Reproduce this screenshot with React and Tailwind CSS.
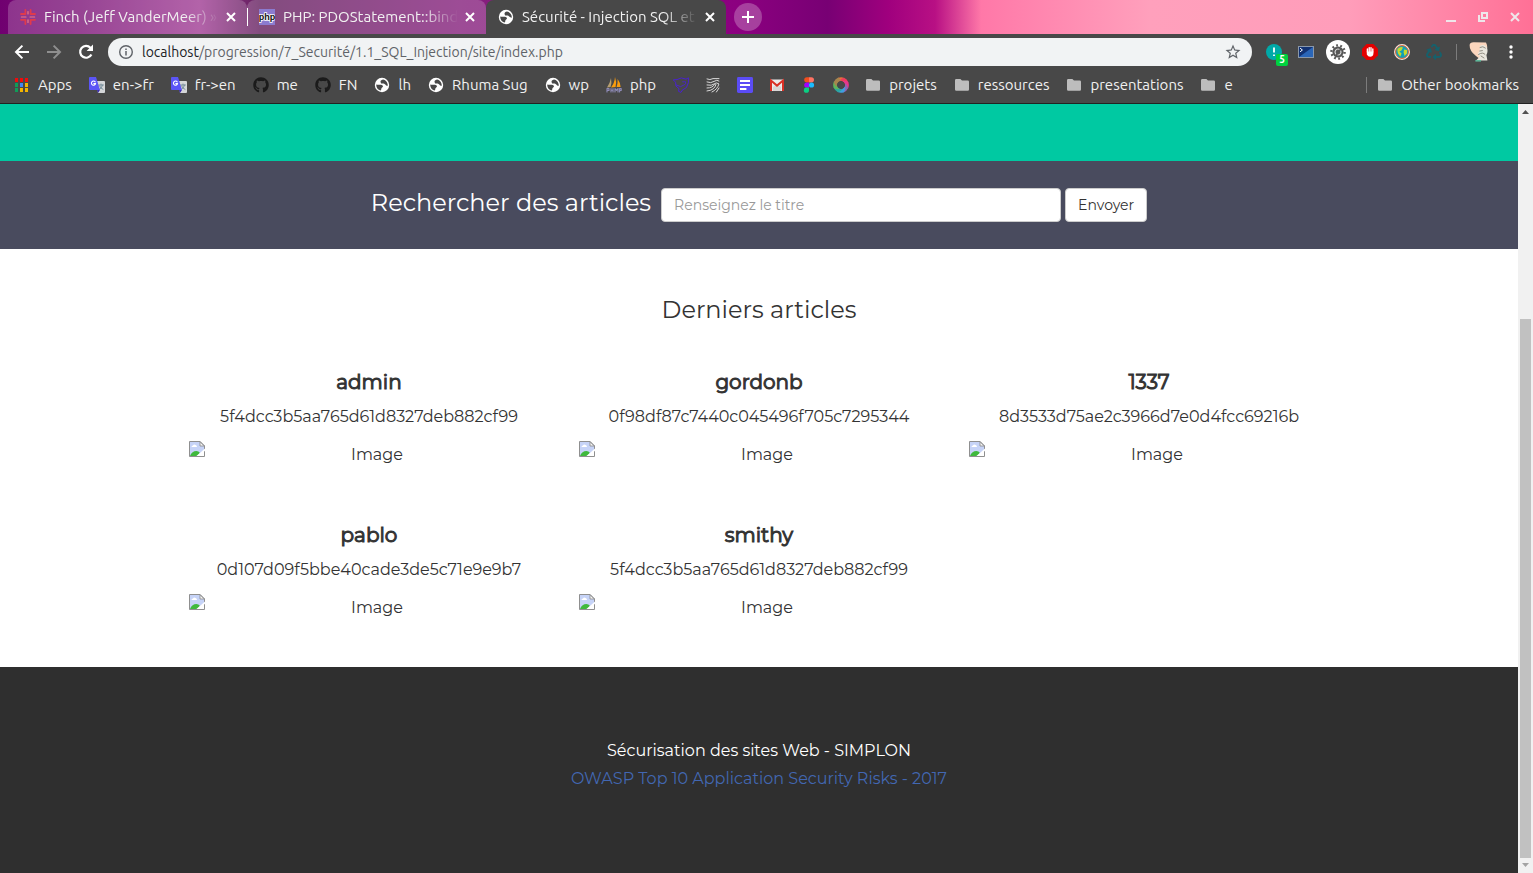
import { FaGithub, FaRecycle } from "react-icons/fa";
import { MdStarBorder } from "react-icons/md";

const stroke = { fill: "none", strokeLinecap: "round", strokeLinejoin: "round" };

function GlobeIcon() {
  return (
    <svg viewBox="0 0 16 16" className="size-4 shrink-0" aria-hidden="true">
      <circle cx="8" cy="8" r="7.2" fill="#fff" />
      <path d="M9 2.4 C7.2 2.8 6.2 3.8 6.6 5.2 L7.2 6.4 H9.6 C11.4 6.6 11 8.4 13.8 8.8 C14 5.6 12 3 9 2.4Z" fill="#484848" />
      <path d="M2.3 7.6 L3.4 7.8 H7 C9.2 8 9.6 9.8 8.2 10.6 C7 11.2 7.6 12.6 6.8 13.6 C4 13 2 10.6 2.3 7.6Z" fill="#484848" />
    </svg>
  );
}

function AppsIcon() {
  const colors = ["#f00b0b", "#f00b0b", "#f00b0b", "#0f9d58", "#4285f4", "#f4b400", "#0f9d58", "#f4b400", "#f4b400"];
  return (
    <svg viewBox="0 0 16 16" className="size-4 shrink-0" aria-hidden="true">
      {colors.map((c, i) => (
        <rect key={i} x={1 + (i % 3) * 5} y={1 + Math.floor(i / 3) * 5} width="3" height="4" fill={c} />
      ))}
    </svg>
  );
}

function TranslateIcon() {
  return (
    <svg viewBox="0 0 16 16" className="size-4 shrink-0" aria-hidden="true">
      <path d="M7 4 H15 Q16 4 16 5 V15 Q16 16 15 16 H9 Z" fill="#d4d6d8" />
      <path d="M9.6 8 H14.4 M12 7 V8 M13.6 8 Q13 11 10.4 12.4 M10.6 9 Q11.6 11.4 14 12.4" stroke="#6d8794" strokeWidth="0.9" {...stroke} />
      <path d="M8 13 H11 L9 16 Z" fill="#3a2bb0" />
      <path d="M1 0 H7 L11 13 H1 Q0 13 0 12 V1 Q0 0 1 0 Z" fill="#5b55f6" />
      <path d="M6.2 4.8 A2.1 2.1 0 1 0 6.6 6.6 H4.8" stroke="#fff" strokeWidth="1.1" {...stroke} />
    </svg>
  );
}

function SailIcon() {
  return (
    <svg viewBox="0 0 16 16" className="size-4 shrink-0" aria-hidden="true">
      <path d="M5 1 Q6 6 4.6 10 L1 10.5 Q4 6 5 1Z" fill="#b8a070" />
      <path d="M9 0 Q11 5 9.6 10 L5 10.4 Q8.6 6 9 0Z M11.6 2 Q14.6 6 14.6 10 L10.6 10 Q12 6 11.6 2Z" fill="#f89c0e" />
      <path d="M1 15 V11.5 H3 V13.4 H1 M5 11.5 V15 M7 11.5 V15 M5 13.2 H7 M9 15 V11.5 L10.5 13.4 L12 11.5 V15 M13.6 15 V11.5 H15.2 V13.4 H13.6" stroke="#8f8bb8" strokeWidth="1.1" {...stroke} />
    </svg>
  );
}

function BirdIcon() {
  return (
    <svg viewBox="0 0 16 16" className="size-4 shrink-0" aria-hidden="true">
      <path d="M0.6 2.8 L4 2.6 Q8 -0.6 13 2.2 L15.4 0.8 V5.6 L13.4 10.6 L9.4 13 L8 15.4 L5.6 14.4 L6 11.6 L3 9 L2.6 5.6 Z" stroke="#4a22d0" strokeWidth="1" {...stroke} />
      <path d="M3.4 8 L7.6 9.6 L12 7.4 M9.6 4.8 H12.6 V6.4" stroke="#4a22d0" strokeWidth="0.9" {...stroke} />
    </svg>
  );
}

function WavesIcon() {
  return (
    <svg viewBox="0 0 16 16" className="size-4 shrink-0" aria-hidden="true">
      <path d="M2 2 Q5 3.4 8 1.6 H14 M2 5 Q6 6.6 9 4.4 T14 4 M2 8 Q7 9 9 7 T13.6 6.6 M2 11 Q8 11 9.4 7.4 M2 14 Q9.6 13.4 11 7.4 M7 15 Q12.4 12.4 13.8 7.4 M11.4 15 L14 11" stroke="#d8d8d8" strokeWidth="1" {...stroke} />
    </svg>
  );
}

function FormIcon() {
  return (
    <svg viewBox="0 0 16 16" className="size-4 shrink-0" aria-hidden="true">
      <rect width="16" height="16" rx="1.4" fill="#5b4cf5" />
      <path d="M3 4 H13 M3 8 H13 M3 12 H9.4" stroke="#fff" strokeWidth="1.8" />
    </svg>
  );
}

function GmailIcon() {
  return (
    <svg viewBox="0 0 16 16" className="size-4 shrink-0" aria-hidden="true">
      <path d="M1 2.5 H15 V14 H1 Z" fill="#eceaea" />
      <path d="M4 10 L8 7.4 L12 10 V14 H4Z" fill="#d8d6d6" />
      <path d="M2 14 V3.6 L8 8.6 L14 3.6 V14" fill="none" stroke="#d93025" strokeWidth="2" />
    </svg>
  );
}

function FigmaIcon() {
  return (
    <svg viewBox="0 0 16 16" className="size-4 shrink-0" aria-hidden="true">
      <path d="M8 0.2 H5.8 A2.6 2.6 0 0 0 5.8 5.4 H8Z" fill="#f24e1e" />
      <path d="M8 0.2 H10.4 A2.6 2.6 0 0 1 10.4 5.4 H8Z" fill="#ff7262" />
      <path d="M8 5.4 H5.8 A2.6 2.6 0 0 0 5.8 10.6 H8Z" fill="#a200ff" />
      <circle cx="10.5" cy="8" r="2.6" fill="#1abcfe" />
      <path d="M8 10.6 H5.8 A2.6 2.6 0 1 0 8 13.2Z" fill="#0acf83" />
    </svg>
  );
}

function SwirlIcon() {
  const colors = ["#e8743b", "#ee3d5c", "#e8358c", "#8f62b3", "#3f9fe0", "#2aa6a0", "#5fb55a", "#a6854e"];
  return (
    <svg viewBox="0 0 16 16" className="size-4 shrink-0" aria-hidden="true">
      {colors.map((c, i) => (
        <path key={c} d="M8 0.2 A7.8 7.8 0 0 1 13.8 2.7 Q13.4 5 11.6 6.2 Q10.8 4 8 3.8 Q6 3.8 4.8 5 Q5.4 1.6 8 0.2Z" fill={c} transform={`rotate(${i * 45 - 22} 8 8)`} />
      ))}
      <circle cx="8" cy="8" r="3.4" fill="#484848" />
    </svg>
  );
}

function FolderIcon() {
  return (
    <svg viewBox="0 0 16 16" className="size-4 shrink-0" aria-hidden="true">
      <path d="M1 3.2 Q1 2 2.2 2 H6.4 L8 3.6 H13.8 Q15 3.6 15 4.8 V12.6 Q15 13.8 13.8 13.8 H2.2 Q1 13.8 1 12.6Z" fill="#bdbdbd" />
    </svg>
  );
}

function GithubIcon() {
  return <FaGithub className="size-4 shrink-0 text-[#1b1b1b]" aria-hidden="true" />;
}

function SlackIcon() {
  return (
    <svg viewBox="0 0 16 16" className="size-4 shrink-0" aria-hidden="true">
      <path d="M5.4 1 V5 H1 M10.6 1 V5 H15 M1 10.8 H5.4 V15 M15 10.8 H10.6 V15" stroke="#e03a4c" strokeWidth="1.8" {...stroke} />
      <path d="M8 2.6 V5 M8 10.8 V13.4 M1.4 8 H6 M10 8 H14.6" stroke="#f07a80" strokeWidth="1.2" {...stroke} />
    </svg>
  );
}

function PhpIcon() {
  return (
    <svg viewBox="0 0 16 16" className="size-4 shrink-0" aria-hidden="true">
      <rect width="16" height="16" fill="#8b7bd0" />
      <text x="8" y="11" textAnchor="middle" fontSize="9" fontWeight="700" fontFamily="Liberation Sans, sans-serif" stroke="#fff" strokeWidth="1.6" paintOrder="stroke" fill="#111">php</text>
    </svg>
  );
}

function CloseIcon() {
  return (
    <svg viewBox="0 0 16 16" className="size-4" aria-hidden="true">
      <path d="M4 4 L12 12 M12 4 L4 12" stroke="currentColor" strokeWidth="2" />
    </svg>
  );
}

function BrokenImageIcon() {
  return (
    <svg viewBox="0 0 16 16" className="size-4 shrink-0" role="img" aria-label="Image manquante">
      <path d="M0.5 0.5 H11 L15.5 5 V9 L9 15.5 H0.5Z" fill="#c6d3f7" />
      <path d="M2.5 6 Q2.6 4.6 4 4.4 Q5 2.8 6.6 4 Q8 4.4 8 6Z" fill="#fff" />
      <path d="M1 15 Q3 10 7.4 10 Q9.6 10.2 11 12 L8.4 15Z" fill="#3fb93d" />
      <path d="M11 0.5 V5 H15.5Z" fill="#f4f4f4" stroke="#8a8a8a" strokeWidth="0.8" />
      <path d="M0.5 15.5 V0.5 H11 L15.5 5 V15.5 Z" fill="none" stroke="#8f8f8f" strokeWidth="1" />
      <path d="M7.4 15 L16 7.6 V9.8 L10.4 15Z" fill="#fff" />
    </svg>
  );
}

const tabs = [
  { title: "Finch (Jeff VanderMeer) »", Icon: SlackIcon },
  { title: "PHP: PDOStatement::bind", Icon: PhpIcon },
  { title: "Sécurité - Injection SQL et", Icon: GlobeIcon, active: true },
];

const bookmarks = [
  { label: "Apps", Icon: AppsIcon },
  { label: "en->fr", Icon: TranslateIcon },
  { label: "fr->en", Icon: TranslateIcon },
  { label: "me", Icon: GithubIcon },
  { label: "FN", Icon: GithubIcon },
  { label: "lh", Icon: GlobeIcon },
  { label: "Rhuma Sug", Icon: GlobeIcon },
  { label: "wp", Icon: GlobeIcon },
  { label: "php", Icon: SailIcon },
  { name: "Oiseau", Icon: BirdIcon },
  { name: "Vagues", Icon: WavesIcon },
  { name: "Formulaire", Icon: FormIcon },
  { name: "Gmail", Icon: GmailIcon },
  { name: "Figma", Icon: FigmaIcon },
  { name: "Spirale", Icon: SwirlIcon },
  { label: "projets", Icon: FolderIcon },
  { label: "ressources", Icon: FolderIcon },
  { label: "presentations", Icon: FolderIcon },
  { label: "e", Icon: FolderIcon },
];

const articles = [
  { title: "admin", text: "5f4dcc3b5aa765d61d8327deb882cf99" },
  { title: "gordonb", text: "0f98df87c7440c045496f705c7295344" },
  { title: "1337", text: "8d3533d75ae2c3966d7e0d4fcc69216b" },
  { title: "pablo", text: "0d107d09f5bbe40cade3de5c71e9e9b7" },
  { title: "smithy", text: "5f4dcc3b5aa765d61d8327deb882cf99" },
];

function Tab({ title, Icon, active }) {
  return (
    <div className={active ? "flex w-60 items-center gap-2 rounded-t-lg bg-[#484848] pr-2 pl-3" : "flex w-[239px] items-center gap-2 rounded-t-lg bg-white/20 pr-2 pl-3"}>
      <Icon />
      <span className="-mr-1 min-w-0 flex-1 overflow-hidden whitespace-nowrap text-[#f1f1f1] mask-r-from-80% mask-r-to-100%">{title}</span>
      <button type="button" aria-label={`Fermer ${title}`} className="text-white"><CloseIcon /></button>
    </div>
  );
}

function TabStrip() {
  return (
    <div className="flex h-[34px] items-stretch bg-[linear-gradient(90deg,#700070_0%,#7c1478_5%,#a03c94_13%,#64205f_17%,#85207c_30%,#8c0080_48%,#780074_54%,#a0007e_58%,#b81084_61%,#ff78a8_64%,#ffa0bc_75%,#ff9dba_88%,#ff7096_100%)] pl-2">
      <Tab {...tabs[0]} />
      <div className="my-2 w-px bg-white" />
      <div className="-ml-px flex">
        <Tab {...tabs[1]} />
        <Tab {...tabs[2]} />
      </div>
      <button type="button" aria-label="Nouvel onglet" className="ml-2 flex size-7 items-center justify-center self-center rounded-full bg-white/25 text-white">
        <svg viewBox="0 0 16 16" className="size-4" aria-hidden="true"><path d="M8 2 V14 M2 8 H14" stroke="currentColor" strokeWidth="2" /></svg>
      </button>
      <div className="ml-auto flex items-center gap-4 pr-2.5 text-[#efe6ea]">
        <button type="button" aria-label="Réduire">
          <svg viewBox="0 0 16 16" className="size-4"><path d="M3 12 H13" stroke="currentColor" strokeWidth="2" /></svg>
        </button>
        <button type="button" aria-label="Restaurer">
          <svg viewBox="0 0 16 16" className="size-4"><path d="M7 4 H12 V9 H7 Z M4 6 V12 H10" fill="none" stroke="currentColor" strokeWidth="2" /></svg>
        </button>
        <button type="button" aria-label="Fermer la fenêtre"><CloseIcon /></button>
      </div>
    </div>
  );
}

function Extensions() {
  return (
    <div className="flex items-center gap-4">
      <button type="button" aria-label="Alertes, 5" className="relative">
        <svg viewBox="0 0 16 16" className="size-4"><circle cx="8" cy="8" r="8" fill="#00a9a8" /><path d="M8 3.6 V8.4 M8 10.4 V12" stroke="#fff" strokeWidth="1.8" /></svg>
        <span className="absolute top-2.5 left-2.5 flex size-3 items-center justify-center rounded-xs bg-[#00d13f] text-[10px] leading-3 font-bold text-white">5</span>
      </button>
      <button type="button" aria-label="Terminal">
        <svg viewBox="0 0 16 16" className="size-4"><rect x="0.5" y="2.5" width="15" height="11" fill="#2a66b8" stroke="#8a98aa" /><path d="M1 3 H15 L1 13Z" fill="#123273" /><path d="M2.4 4.4 L4.4 6 L2.4 7.6" stroke="#fff" strokeWidth="1" {...stroke} /></svg>
      </button>
      <button type="button" aria-label="Débogage" className="-mx-1 flex size-6 items-center justify-center rounded-full bg-white">
        <svg viewBox="0 0 16 16" className="size-4">
          <circle cx="8" cy="8" r="5.6" fill="#565656" />
          <circle cx="8" cy="8" r="6.6" fill="none" stroke="#565656" strokeWidth="2.4" strokeDasharray="1.8 2.35" />
          <path d="M5.6 9.8 A3 3 0 0 1 9 5.2 M10.8 7 A3 3 0 0 1 8 11" stroke="#d8d8d8" strokeWidth="1.2" {...stroke} />
        </svg>
      </button>
      <button type="button" aria-label="Bloqueur">
        <svg viewBox="0 0 16 16" className="size-4"><path d="M4.7 0 H11.3 L16 4.7 V11.3 L11.3 16 H4.7 L0 11.3 V4.7Z" fill="#e40000" /><path d="M5.4 8 V5 M7.2 8 V3.6 M9 8 V3.6 M10.8 8 V5" stroke="#fff" strokeWidth="1.4" {...stroke} /><path d="M4.8 7.4 H11.4 V10 Q11 12.8 8.2 12.8 Q6 12.6 4.8 10.4Z" fill="#fff" /></svg>
      </button>
      <button type="button" aria-label="Globe">
        <svg viewBox="0 0 16 16" className="size-4"><circle cx="8" cy="8" r="7.2" fill="#12a0b8" stroke="#f1e3da" strokeWidth="1.5" /><circle cx="8" cy="8" r="6.4" fill="none" stroke="#e8602c" strokeWidth="1" /><path d="M3.4 5 Q6 2.4 9 3.4 L7.4 6.4 L5.4 7.4 L7.6 9.4 L6.4 12.6 Q3 9.6 3.4 5Z M10 5.4 L13 6 V9.6 L10.6 12 L9.6 8.4Z" fill="#c5d92d" /></svg>
      </button>
      <button type="button" aria-label="Recyclage"><FaRecycle className="size-4 text-[#17606b]" /></button>
      <div className="-ml-0.5 h-4 w-px bg-[#7c7c7c]" />
      <button type="button" aria-label="Profil" className="-ml-1">
        <svg viewBox="0 0 20 20" className="size-5">
          <path d="M0.6 3 Q1 0 5 0.2 L17 0.6 Q20 6 16 11 L12 18 L7 14 Q0.4 9 0.6 3Z" fill="#fbd5bd" />
          <path d="M11 4 Q15 1.4 17.6 5 Q19.6 9 17.4 13 L18.4 18.6 H7 L11 14.6 L8.8 12 L10.6 9Z" fill="#e9e6dd" />
          <path d="M11 5.4 Q14 3.6 16.4 6 M10.8 9 L13.4 8.6 M9.6 12.4 Q14 9.6 16 12.4 M12 14 L15 16" stroke="#7b756a" strokeWidth="0.8" {...stroke} />
          <path d="M6.4 18.8 H12" stroke="#5fb79a" strokeWidth="1.6" />
        </svg>
      </button>
      <button type="button" aria-label="Menu" className="-ml-1 text-white">
        <svg viewBox="0 0 20 20" className="size-5" fill="currentColor"><circle cx="10" cy="5" r="1.7" /><circle cx="10" cy="10" r="1.7" /><circle cx="10" cy="15" r="1.7" /></svg>
      </button>
    </div>
  );
}

function Toolbar() {
  return (
    <div className="flex h-9 items-center gap-3.5 px-3 text-sm">
      <div className="flex items-center gap-3 text-white">
        <button type="button" aria-label="Précédent">
          <svg viewBox="0 0 20 20" className="size-5"><path d="M17 10 H4.6 M10.4 3.6 L4 10 L10.4 16.4" fill="none" stroke="currentColor" strokeWidth="2" /></svg>
        </button>
        <button type="button" aria-label="Suivant" className="text-[#8f8f8f]">
          <svg viewBox="0 0 20 20" className="size-5"><path d="M3 10 H15.4 M9.6 3.6 L16 10 L9.6 16.4" fill="none" stroke="currentColor" strokeWidth="2" /></svg>
        </button>
        <button type="button" aria-label="Actualiser">
          <svg viewBox="0 0 20 20" className="size-5"><path d="M15.4 12.4 A5.9 5.9 0 1 1 14.4 5.8 L15 6.4" fill="none" stroke="currentColor" strokeWidth="2.2" /><path d="M17 2.6 V9 H10.6Z" fill="currentColor" /></svg>
        </button>
      </div>
      <div className="-ml-0.5 flex h-7 flex-1 items-center gap-2 rounded-full bg-[#f1f3f4] px-2.5 text-[#5f6368]">
        <svg viewBox="0 0 16 16" className="size-4" aria-hidden="true"><circle cx="8" cy="8" r="6.3" fill="none" stroke="currentColor" strokeWidth="1.4" /><path d="M8 7 V11.6 M8 4.4 V6" stroke="currentColor" strokeWidth="1.5" /></svg>
        <p className="flex-1"><span className="text-[#202124]">localhost</span>/progression/7_Securité/1.1_SQL_Injection/site/index.php</p>
        <button type="button" aria-label="Ajouter aux favoris"><MdStarBorder className="size-[18px]" /></button>
      </div>
      <Extensions />
    </div>
  );
}

function BookmarkBar() {
  return (
    <nav aria-label="Favoris" className="flex h-[33px] items-center gap-4 px-3.5 pb-[3px] text-[#f1f1f1]">
      {bookmarks.map(({ label, name, Icon }, i) => (
        <a key={i} href="#" aria-label={name} className="flex items-center gap-2 leading-4 whitespace-nowrap">
          <Icon />
          {label && <span className="pr-px">{label}</span>}
        </a>
      ))}
      <a href="#" className="ml-auto flex items-center gap-2 border-l border-[#7c7c7c] pl-2.5 leading-4 whitespace-nowrap">
        <FolderIcon />
        Other bookmarks
      </a>
    </nav>
  );
}

function SearchBand() {
  return (
    <form className="flex h-[88px] items-center justify-center gap-1 bg-[#494b5e]" onSubmit={(e) => e.preventDefault()}>
      <label htmlFor="titre" className="mr-1.5 pb-1 text-2xl text-white">Rechercher des articles</label>
      <input id="titre" type="text" placeholder="Renseignez le titre" className="h-[34px] w-[400px] rounded border border-[#ccc] bg-white px-3 text-sm text-[#555] placeholder:text-[#999]" />
      <button type="submit" className="h-[34px] rounded border border-[#ccc] bg-white px-3 text-sm text-[#333]">Envoyer</button>
    </form>
  );
}

function Article({ title, text }) {
  return (
    <article className="px-[15px] text-center">
      <h3 className="text-xl leading-[26px] [-webkit-text-stroke:1px]">{title}</h3>
      <p className="mt-2.5 leading-6">{text}</p>
      <div className="mt-3 flex items-start">
        <BrokenImageIcon />
        <span className="flex-1 leading-7">Image</span>
      </div>
    </article>
  );
}

function ScrollBar() {
  return (
    <div className="flex w-[15px] shrink-0 flex-col items-center bg-[#f1f1f1]" aria-hidden="true">
      <svg viewBox="0 0 15 15" className="size-[15px]"><path d="M4 10 H11 L7.5 6Z" fill="#505050" /></svg>
      <div className="flex w-[11px] flex-1 flex-col justify-end">
        <div className="h-[73%] bg-[#c1c1c1]" />
      </div>
      <svg viewBox="0 0 15 15" className="size-[15px]"><path d="M4 5 H11 L7.5 9Z" fill="#a3a3a3" /></svg>
    </div>
  );
}

export default function App() {
  return (
    <div className="flex min-h-screen flex-col bg-white">
      <header className="border-b border-[#222] bg-[#484848] font-['Ubuntu','Noto_Sans',sans-serif] text-[15px]">
        <TabStrip />
        <Toolbar />
        <BookmarkBar />
      </header>
      <div className="flex flex-1">
        <div className="flex min-w-0 flex-1 flex-col font-['Montserrat','Inter',sans-serif] text-base text-[#333]">
          <div className="h-[57px] bg-[#00c9a2]" />
          <SearchBand />
          <main className="mx-auto w-full max-w-[1170px]">
            <h2 className="pt-[45px] text-center text-2xl">Derniers articles</h2>
            <div className="grid grid-cols-3 gap-y-[53px] pt-[43px] pb-[45px]">
              {articles.map((a) => <Article key={a.title} {...a} />)}
            </div>
          </main>
          <footer className="flex flex-1 flex-col items-center justify-center bg-[#2f2f2f] pb-2.5 leading-7 text-white">
            <p>Sécurisation des sites Web - SIMPLON</p>
            <a href="#" className="text-[#4267b2]">OWASP Top 10 Application Security Risks - 2017</a>
          </footer>
        </div>
        <ScrollBar />
      </div>
    </div>
  );
}
